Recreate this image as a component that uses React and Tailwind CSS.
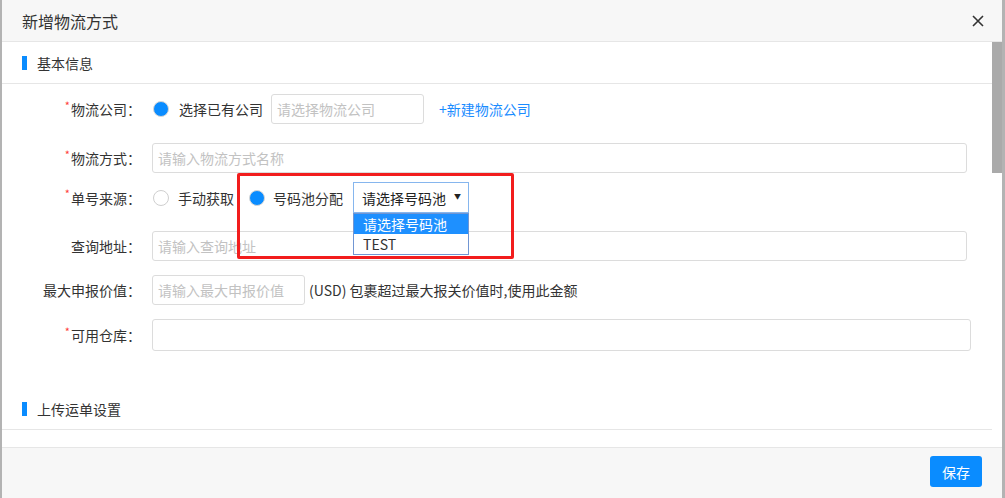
import { useState } from 'react'

const FONT = "font-['Noto_Sans_CJK_SC','Microsoft_YaHei',sans-serif]"

function SectionTitle({ children }) {
  return (
    <div className="flex h-[42px] items-center border-b border-[#e6e6e6] pl-[20px]">
      <span className="h-[14px] w-[5px] bg-[#0a8cff]" />
      <span className="ml-[10px] text-[14px] leading-none text-[#333]">{children}</span>
    </div>
  )
}

function Label({ required, children }) {
  return (
    <div className="flex w-[139px] shrink-0 items-center justify-end text-[14px] leading-none text-[#333]">
      {required && <span className="mr-[1px] -mt-[8px] text-[11px] text-[#ff3b3b]">*</span>}
      <span>{children}：</span>
    </div>
  )
}

function Radio({ checked }) {
  return (
    <span
      className={
        checked
          ? 'block h-[16px] w-[16px] rounded-full border border-[#d6d6d6] bg-[#0a8cff]'
          : 'block h-[16px] w-[16px] rounded-full border border-[#cfcfcf] bg-white'
      }
    />
  )
}

function TextInput({ placeholder, className = '' }) {
  return (
    <input
      readOnly
      placeholder={placeholder}
      className={
        'rounded-[3px] border border-[#dcdcdc] bg-white px-[5px] text-[14px] text-[#333] outline-none placeholder:text-[#c2c2c2] ' +
        className
      }
    />
  )
}

export default function App() {
  const [pool] = useState(['请选择号码池', 'TEST'])

  return (
    <div className={`flex h-[498px] w-[1005px] overflow-hidden bg-[#b3b3b3] pl-[2px] pr-[3px] ${FONT}`}>
      <div className="flex flex-1 flex-col bg-white">
        {/* 标题栏 */}
        <header className="flex h-[42px] shrink-0 items-center justify-between border-b border-[#e6e6e6] bg-[#f7f7f7] pl-[20px] pr-[18px]">
          <span className="text-[16px] leading-none text-[#333]">新增物流方式</span>
          <svg width="12" height="12" viewBox="0 0 12 12" className="mt-[1px]">
            <path d="M1 1 L11 11 M11 1 L1 11" stroke="#333" strokeWidth="1.6" />
          </svg>
        </header>

        {/* 内容 */}
        <div className="flex min-h-0 flex-1">
          <div className="relative flex-1">
            <SectionTitle>基本信息</SectionTitle>

            <div className="mt-[10px] flex h-[30px] items-center">
              <Label required>物流公司</Label>
              <div className="ml-[12px] flex items-center">
                <Radio checked />
                <span className="ml-[10px] text-[14px] leading-none text-[#333]">选择已有公司</span>
                <TextInput placeholder="请选择物流公司" className="ml-[8px] h-[30px] w-[153px]" />
                <span className="ml-[15px] text-[14px] leading-none text-[#1a8cff]">+新建物流公司</span>
              </div>
            </div>

            <div className="mt-[19px] flex h-[30px] items-center">
              <Label required>物流方式</Label>
              <TextInput placeholder="请输入物流方式名称" className="ml-[11px] h-[30px] w-[815px]" />
            </div>

            <div className="relative mt-[9px] flex h-[31px] items-center">
              <Label required>单号来源</Label>
              <div className="ml-[12px] flex items-center">
                <Radio />
                <span className="ml-[9px] text-[14px] leading-none text-[#333]">手动获取</span>
                <span className="ml-[15px]">
                  <Radio checked />
                </span>
                <span className="ml-[8px] text-[14px] leading-none text-[#333]">号码池分配</span>
                <div className="relative ml-[10px]">
                  <div className="flex h-[31px] w-[116px] items-center justify-between border border-[#86b6ee] bg-white pl-[8px] pr-[7px]">
                    <span className="text-[14px] leading-none text-[#222]">{pool[0]}</span>
                    <span className="mb-[2px] text-[7px] leading-none text-[#222]">▼</span>
                  </div>
                  <ul className="absolute left-0 top-[31px] z-20 w-[116px] border border-[#7196d3] bg-white">
                    {pool.map((p, i) => (
                      <li
                        key={p}
                        className={
                          i === 0
                            ? 'flex h-[20px] items-center bg-[#1e90ff] pl-[9px] text-[14px] leading-none text-white'
                            : 'flex h-[20px] items-center pl-[9px] text-[14px] leading-none text-[#333]'
                        }
                      >
                        {p}
                      </li>
                    ))}
                  </ul>
                </div>
              </div>
              {/* 标注红框 */}
              <div className="pointer-events-none absolute left-[235px] top-[-9px] z-30 h-[86px] w-[277px] rounded-[2px] border-[3px] border-[#f21d1d]" />
            </div>

            <div className="mt-[18px] flex h-[30px] items-center">
              <Label>查询地址</Label>
              <TextInput placeholder="请输入查询地址" className="ml-[11px] h-[30px] w-[815px]" />
            </div>

            <div className="mt-[14px] flex h-[30px] items-center">
              <Label>最大申报价值</Label>
              <TextInput placeholder="请输入最大申报价值" className="ml-[11px] h-[30px] w-[153px]" />
              <span className="ml-[4px] text-[14px] leading-none text-[#333]">(USD) 包裹超过最大报关价值时,使用此金额</span>
            </div>

            <div className="mt-[14px] flex h-[32px] items-center">
              <Label required>可用仓库</Label>
              <TextInput className="ml-[11px] h-[32px] w-[819px]" />
            </div>

            <div className="mt-[37px]">
              <SectionTitle>上传运单设置</SectionTitle>
            </div>
          </div>

          {/* 滚动条 */}
          <div className="w-[10px] shrink-0 bg-white">
            <div className="h-[131px] bg-[#aaaaaa]" />
          </div>
        </div>

        {/* 底部 */}
        <footer className="flex h-[51px] shrink-0 items-start justify-end border-t border-[#e6e6e6] bg-[#f7f7f7] pr-[20px] pt-[8px]">
          <button className="h-[31px] w-[52px] rounded-[3px] bg-[#0a8cff] text-[14px] leading-none text-white">
            保存
          </button>
        </footer>
      </div>
    </div>
  )
}
